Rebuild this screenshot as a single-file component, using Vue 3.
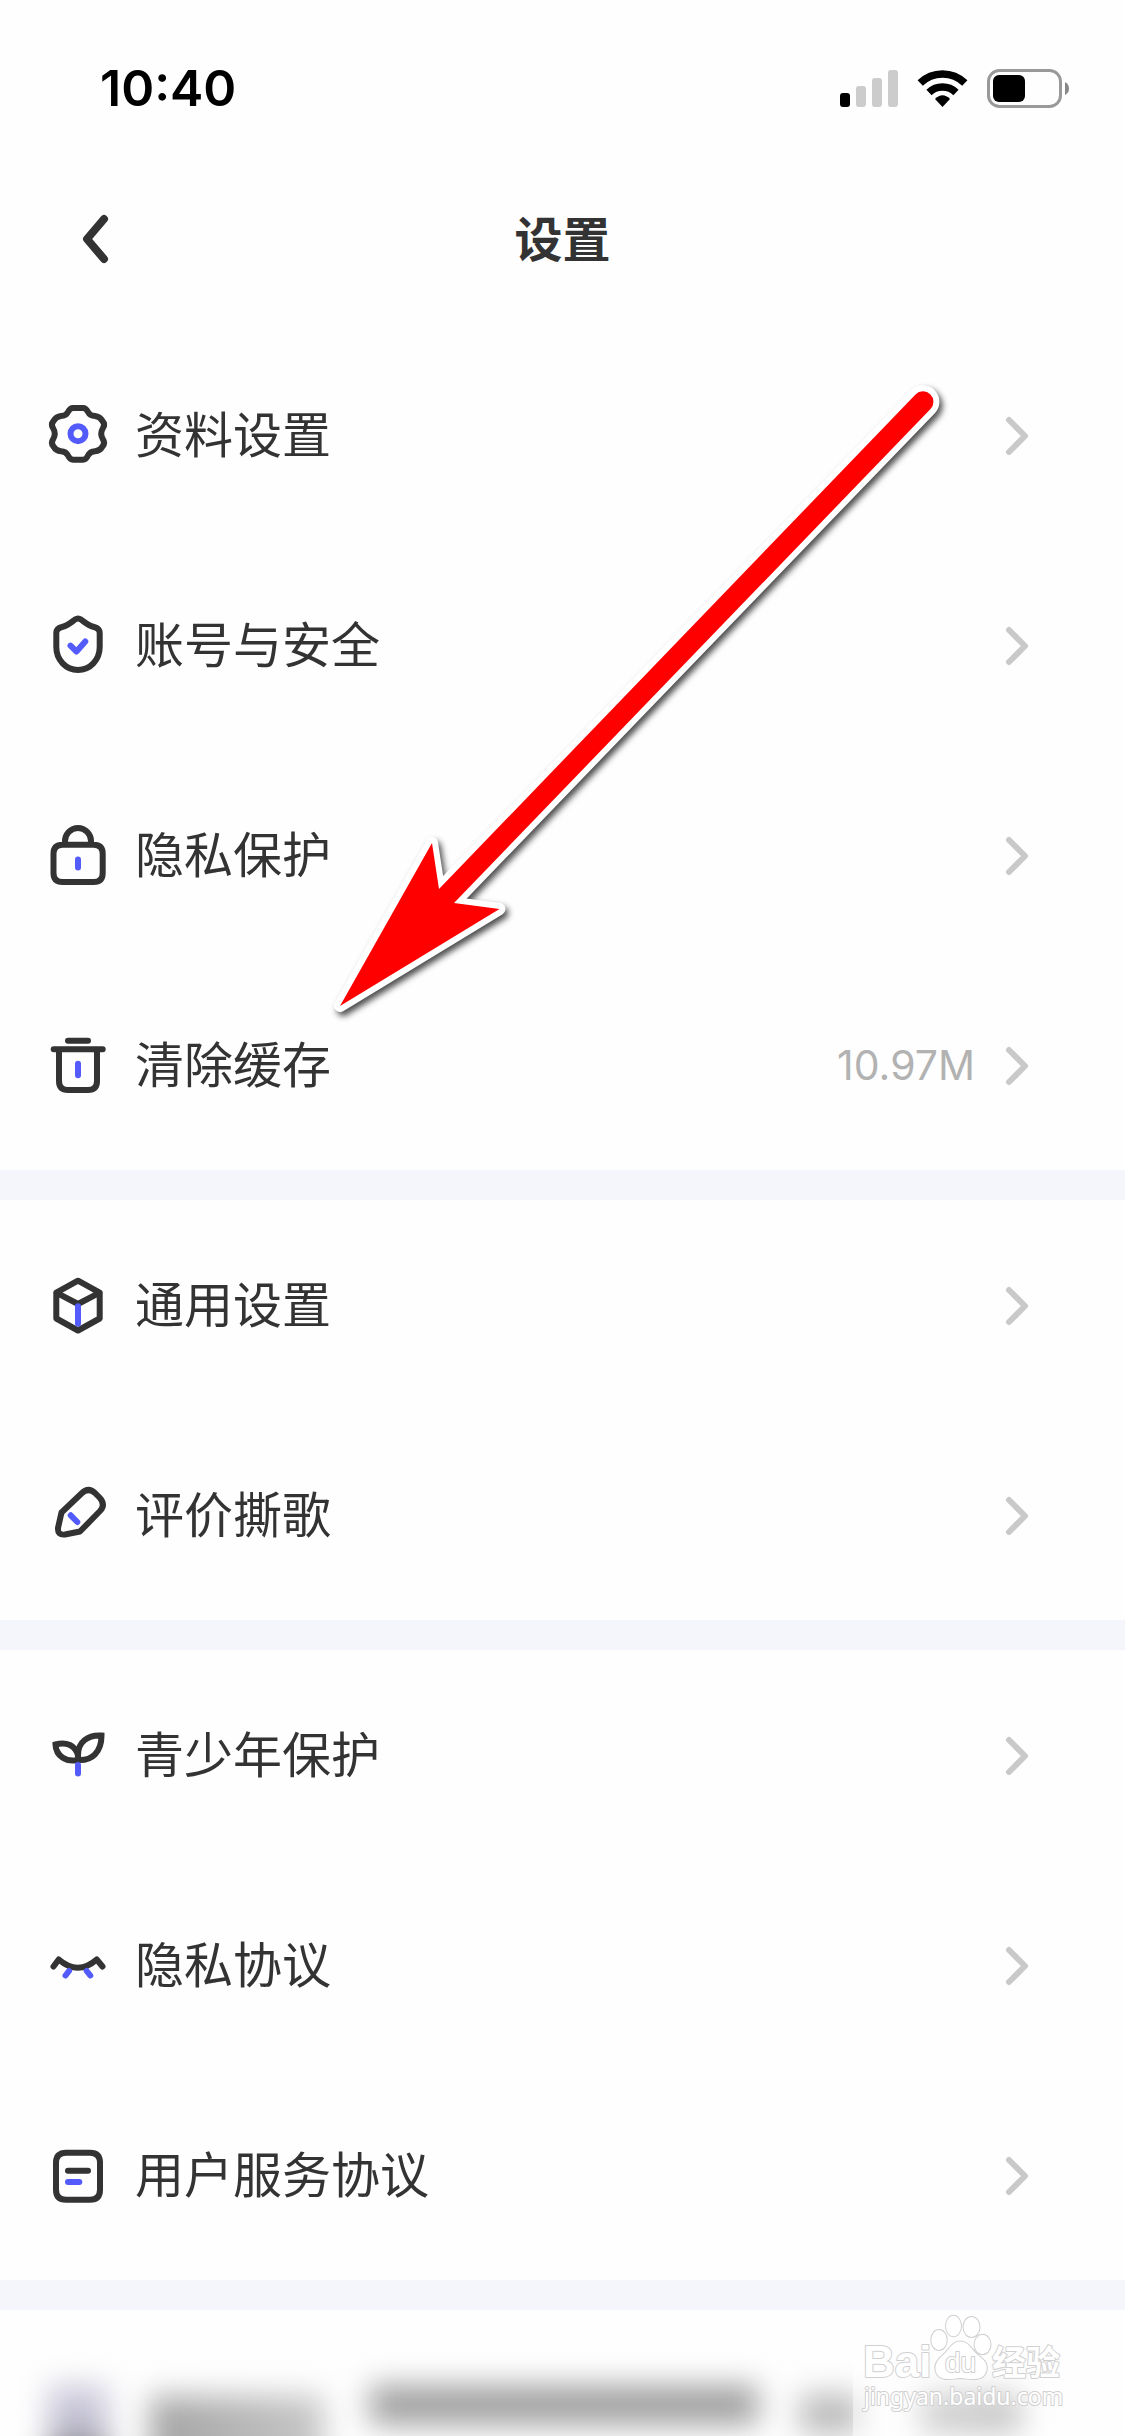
<script setup>
const groups = [
  [
    {
      label: '资料设置',
      dark: 'M25 3H35Q38 3 40 7Q42 11 47 11Q52 11.5 54.5 16Q57.500 19.500 55 23Q51.500 28.700 55 34.500Q57.500 38 54.500 41.500Q52 46 47 46.300Q42 46.500 40 50.500Q38 54.700 35 54.700H25Q22 54.700 20 50.500Q18 46.500 13 46.300Q8 46 5.500 41.500Q2.500 38 5 34.500Q8.500 28.700 5 23Q2.500 19.500 5.500 16Q8 11.500 13 11Q18 11 20 7Q22 3 25 3Z',
      accent: 'M22.5 28.700a7.500 7.500 0 1 0 15 0a7.500 7.500 0 1 0 -15 0Z',
    },
    {
      label: '账号与安全',
      dark: 'M27 4.500Q30 2.500 33 4.500C38 8.500 40 10.500 46 12Q51.700 13.500 51.700 18V32C51.700 45 42 55 30 55S8.300 45 8.300 32V18Q8.300 13.500 14 12C20 10.500 22 8.500 27 4.500Z',
      accent: 'M22.500 30.700L28.500 36.500L37.300 26.500',
    },
    {
      label: '隐私保护',
      dark: 'M14.500 19.700H45.700Q54.700 19.700 54.700 28.700V48Q54.700 57 45.700 57H14.500Q5.500 57 5.500 48V28.700Q5.500 19.700 14.500 19.700ZM17 19.700V16a13 13 0 0 1 26 0V19.700',
      accent: 'M30 34.500V42.500',
    },
    {
      label: '清除缓存',
      value: '10.97M',
      dark: 'M20 5.800H40M5.700 14.200H54.700M11 16V46Q11 55 20 55H40Q49 55 49 46V16',
      accent: 'M30 28.800V40.200',
    },
  ],
  [
    {
      label: '通用设置',
      dark: 'M30 5.700L51.700 17.700V43.500L30 55.500L8.300 43.500V17.700ZM8.300 17.700L30 29L51.700 17.700',
      accent: 'M30 31.300V48.700',
    },
    {
      label: '评价撕歌',
      dark: 'M13.500 27.500L34 8Q40.500 2 47 8L51.500 12.500Q58 19.500 52 26L32 46.500L17 49.500Q9.500 50.500 10 43Z',
      accent: 'M22.700 30.300L29.300 37',
    },
  ],
  [
    {
      label: '青少年保护',
      sharp: true,
      dark: 'M30 35C44 36 53.500 27 53.500 10.500C40 9.500 30 17 30 30V35ZM30 35C18 37.500 8 31 7.500 19.500C18 16.500 28 20 30 31',
      accent: 'M30 40V48.500',
    },
    {
      label: '隐私协议',
      dark: 'M5.500 31.500L10.700 24.500Q30 41 48.700 24.500L54.500 31.500',
      accent: 'M21 36L17.500 40.500M38.700 36L42.300 40.500',
    },
    {
      label: '用户服务协议',
      dark: 'M18 7.700H42Q52 7.700 52 17.700V44.700Q52 54.700 42 54.700H18Q8 54.700 8 44.700V17.700Q8 7.700 18 7.700ZM20 25.700H40',
      accent: 'M20 37H31.300',
    },
  ],
]
</script>

<template>
  <div class="page">
    <div class="status">
      <span class="time">10:40</span>
      <div class="indicators">
        <svg width="58" height="39" viewBox="0 0 58 39" aria-hidden="true">
          <rect x="0" y="24" width="10" height="14" rx="3" fill="#000" />
          <rect x="16" y="17" width="10" height="21" rx="3" fill="#ccc" />
          <rect x="32" y="9" width="10" height="29" rx="3" fill="#ccc" />
          <rect x="48" y="1" width="10" height="37" rx="3" fill="#ccc" />
        </svg>
        <svg width="51" height="39" viewBox="0 0 51 39" aria-hidden="true">
          <path d="M3.200 14.500A32 32 0 0 1 47.800 14.500" transform="translate(0 -.5)" fill="none" stroke="#000" stroke-width="7.500" />
          <path d="M12 23.500A19.500 19.500 0 0 1 39 23.500" fill="none" stroke="#000" stroke-width="7.500" />
          <path d="M18 30Q25.500 22.500 33 30L25.500 38Z" fill="#000" />
        </svg>
        <svg width="82" height="39" viewBox="0 0 82 39" aria-hidden="true">
          <rect x="1.500" y="1.500" width="72" height="36" rx="11" fill="none" stroke="#999" stroke-width="3" />
          <rect x="6" y="6" width="32" height="27" rx="6" fill="#000" />
          <path d="M78 13Q82 15 82 19.500T78 26Z" fill="#888" />
        </svg>
      </div>
    </div>

    <header class="nav">
      <button class="back" type="button" aria-label="返回">
        <svg width="30" height="52" viewBox="0 0 30 52" aria-hidden="true">
          <path d="M24 6L7 26L24 46" />
        </svg>
      </button>
      <h1>设置</h1>
    </header>

    <main>
      <ul v-for="(group, i) in groups" :key="i" class="group">
        <li v-for="item in group" :key="item.label">
          <a class="row" href="#">
            <svg class="icon" :class="{ sharp: item.sharp }" viewBox="0 0 60 60" aria-hidden="true">
              <path class="dark" :d="item.dark" />
              <path class="accent" :d="item.accent" />
            </svg>
            <span class="label">{{ item.label }}</span>
            <span v-if="item.value" class="value">{{ item.value }}</span>
            <svg class="chevron" viewBox="0 0 24 42" aria-hidden="true">
              <path d="M4 6L20 22L4 38" />
            </svg>
          </a>
        </li>
      </ul>

      <section class="obscured">
        <div class="smudges" aria-hidden="true">
          <span class="smudge badge"></span>
          <span class="smudge name"></span>
          <span class="smudge bar"></span>
          <span class="smudge tail"></span>
          <span class="smudge tail wide"></span>
        </div>
        <svg class="watermark" width="240" height="126" viewBox="0 0 240 126">
          <defs>
            <linearGradient id="veil" x1="0" x2="1" y1="0" y2="0">
              <stop offset="0" stop-color="#fff" stop-opacity="0.500" />
              <stop offset="1" stop-color="#fff" stop-opacity="0" />
            </linearGradient>
          </defs>
          <rect width="240" height="126" fill="url(#veil)" />
          <g class="mark">
            <text class="bai" x="10" y="67">Bai</text>
            <ellipse cx="86" cy="30" rx="7.700" ry="10" />
            <ellipse cx="100.500" cy="16" rx="7.500" ry="10.300" />
            <ellipse cx="118.500" cy="17" rx="8" ry="10" />
            <ellipse cx="129.500" cy="34.500" rx="8" ry="9.700" />
            <path d="M107.500 31.500C116 31.500 119 41 126 46C133 51 136 57 132 64C128 71 117 69 107.500 68C98 69 88 71 84 64C80 57 84 50 90 45C97 39 99 31.500 107.500 31.500Z" />
            <text class="du" x="92" y="62">du</text>
            <text class="cn" x="139" y="65">经验</text>
            <text class="url" x="11" y="95">jingyan.baidu.com</text>
          </g>
        </svg>
      </section>
    </main>

    <svg class="arrow" width="640" height="660" viewBox="320 370 640 660" aria-hidden="true">
      <path
        d="M340 1006L432 843L439 889L915.500 394.500A10.300 10.300 0 0 1 930.500 409L454 903L499.500 909Z"
        class="halo"
      />
      <path d="M340 1006L432 843L439 889L915.500 394.500A10.300 10.300 0 0 1 930.500 409L454 903L499.500 909Z" fill="#f00" />
    </svg>
  </div>
</template>

<style>
body {
  margin: 0;
  background: #fefefe;
}
</style>

<style scoped>
.page {
  position: relative;
  overflow: hidden;
  background: #fefefe;
  color: #333;
  font-family: Inter, 'Noto Sans CJK SC', sans-serif;
}

.status {
  display: flex;
  align-items: center;
  justify-content: space-between;
  height: 132px;
  padding: 45px 56px 0 100px;
  box-sizing: border-box;
}

.time {
  color: #000;
  font-size: 50px;
  font-weight: 600;
  line-height: 87px;
}

.indicators {
  display: flex;
  gap: 19px;
}

.nav {
  display: grid;
  grid-template-columns: 1fr auto 1fr;
  align-items: center;
  height: 198px;
  padding: 16px 80px 0;
  box-sizing: border-box;
}

.back {
  display: flex;
  justify-self: start;
  padding: 0;
  border: 0;
  background: none;
}

.back path {
  fill: none;
  stroke: #333;
  stroke-width: 8;
  stroke-linecap: round;
  stroke-linejoin: round;
}

h1,
.label {
  margin: 0;
  padding-bottom: 6px;
  font-family: 'Noto Sans CJK SC', sans-serif;
  line-height: 72px;
}

h1 {
  font-size: 48px;
  font-weight: 600;
}

.group {
  margin: 0;
  padding: 0;
  list-style: none;
  border-bottom: 30px solid #f5f6fb;
}

.row {
  display: flex;
  align-items: center;
  height: 210px;
  padding: 0 96px 0 48px;
  color: inherit;
  text-decoration: none;
}

.icon {
  width: 60px;
  height: 60px;
  margin-right: 27px;
  overflow: visible;
  fill: none;
  stroke-width: 6;
  stroke-linecap: round;
  stroke-linejoin: round;
}

.icon.sharp {
  stroke-linejoin: miter;
}

.dark {
  stroke: #333;
}

.accent {
  stroke: #545bfb;
}

.label {
  flex: 1;
  font-size: 49px;
}

.value {
  margin-right: 30px;
  color: #b2b2b2;
  font-size: 41px;
  line-height: 72px;
}

.chevron {
  width: 24px;
  height: 42px;
  fill: none;
  stroke: #c9c9c9;
  stroke-width: 6;
  stroke-linecap: round;
  stroke-linejoin: round;
}

.obscured {
  position: relative;
  height: 126px;
  overflow: hidden;
}

.smudges {
  display: flex;
  align-items: flex-start;
  padding: 76px 0 0 48px;
  filter: blur(15px);
}

.smudge {
  flex: none;
  height: 38px;
  background: #9c9c9c;
}

.badge {
  width: 60px;
  height: 100px;
  margin-right: 42px;
  background: linear-gradient(#c8c6d8 40px, #666 80px);
}

.name {
  width: 174px;
  height: 90px;
  margin-top: 10px;
  margin-right: 46px;
  background: linear-gradient(90deg, #a4a4a4, #c8c8c8);
}

.bar {
  width: 388px;
  margin-right: 42px;
}

.tail {
  width: 60px;
  height: 40px;
  margin-top: 8px;
  margin-right: 60px;
  background: #bababa;
}

.wide {
  width: 100px;
}

.watermark {
  position: absolute;
  top: 0;
  right: 32px;
}

.mark {
  fill: #fff;
  stroke: #d0d0d0;
  stroke-width: 2;
  stroke-linejoin: round;
  paint-order: stroke;
}

.bai {
  font: 700 44px 'Liberation Sans', sans-serif;
}

.du {
  font: 400 28px 'Liberation Sans', sans-serif;
}

.cn {
  font: 700 34px 'Noto Sans CJK SC', sans-serif;
}

.url {
  font: 400 23px 'Noto Sans', sans-serif;
}

.arrow {
  position: absolute;
  top: 370px;
  left: 320px;
  pointer-events: none;
}

.halo {
  fill: #fff;
  stroke: #fff;
  stroke-width: 12;
  stroke-linejoin: round;
  filter: drop-shadow(3px 4px 3px rgba(0, 0, 0, 0.7));
}
</style>
